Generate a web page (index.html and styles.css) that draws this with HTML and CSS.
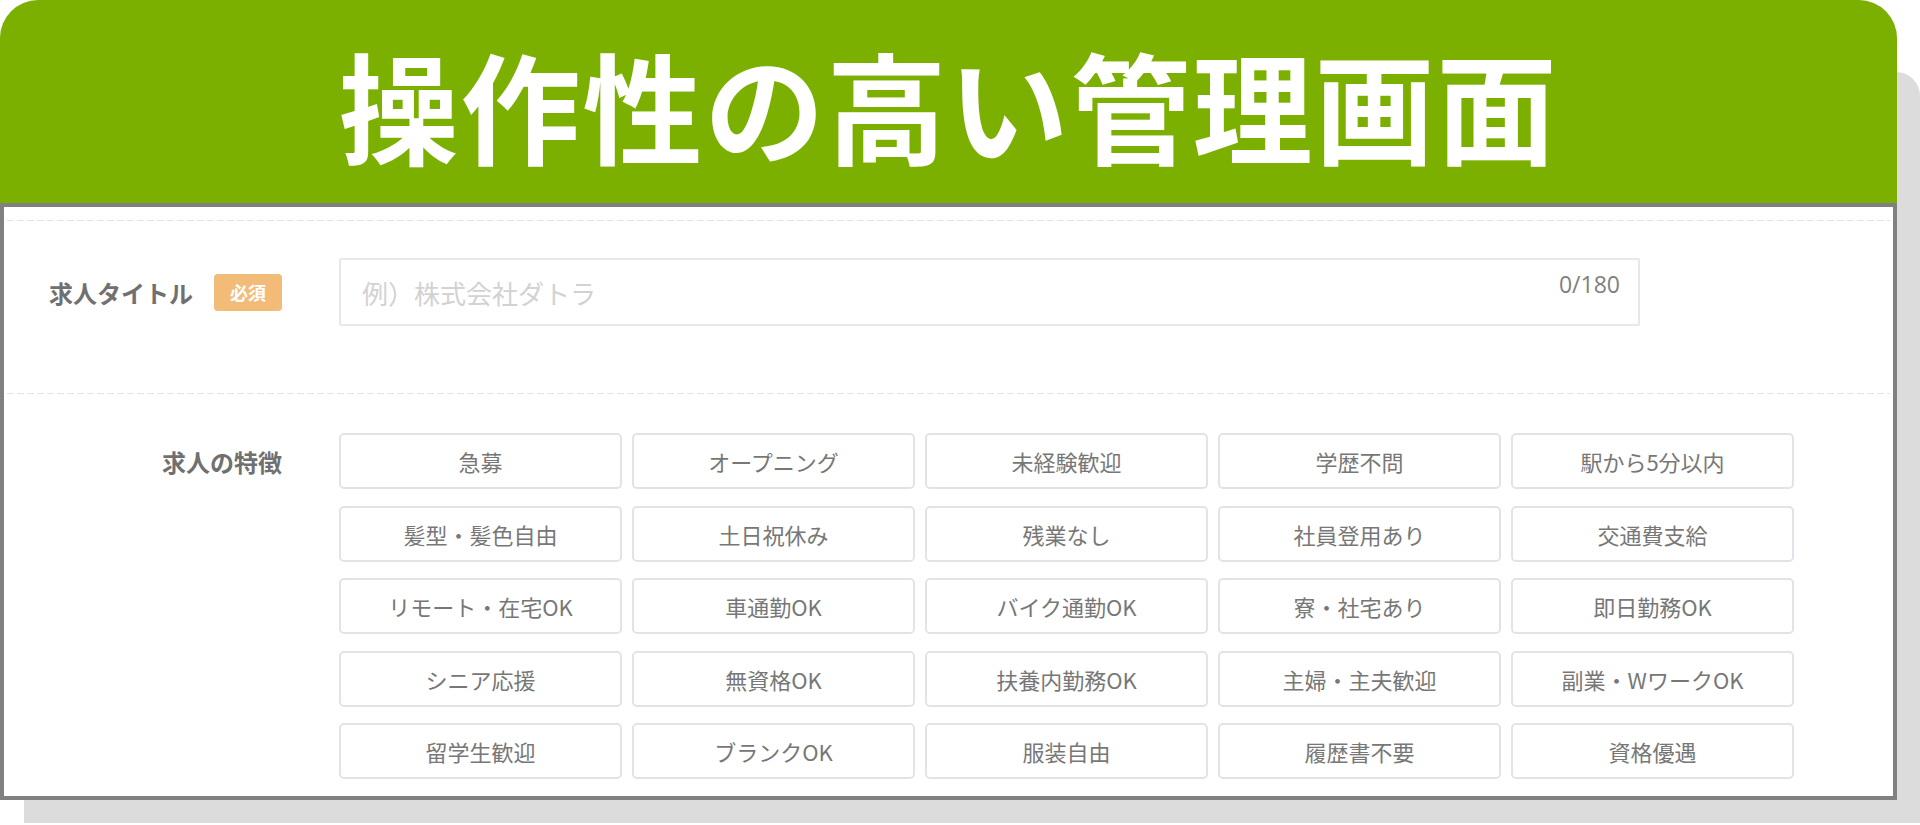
FILE: index.html
```html
<!DOCTYPE html>
<html lang="ja">
<head>
    <meta charset="UTF-8">
    <meta name="viewport" content="width=device-width, initial-scale=1.0">
    <title>操作性の高い管理画面</title>
    <link rel="stylesheet" href="styles.css">
</head>
<body>
    <div class="board">
        <div class="board-head">
            <h1>操作性の高い管理画面</h1>
        </div>
        <div class="panel">
            <div class="form-row title-row">
                <div class="field-label">
                    <span>求人タイトル</span>
                    <span class="required">必須</span>
                </div>
                <div class="text-field">
                    <input type="text" placeholder="例）株式会社ダトラ">
                    <span class="counter">0/180</span>
                </div>
            </div>
            <div class="form-row tags-row">
                <div class="field-label tags-label">
                    <span>求人の特徴</span>
                </div>
                <div class="tag-grid">
                    <span class="tag">急募</span>
                    <span class="tag">オープニング</span>
                    <span class="tag">未経験歓迎</span>
                    <span class="tag">学歴不問</span>
                    <span class="tag">駅から5分以内</span>
                    <span class="tag">髪型・髪色自由</span>
                    <span class="tag">土日祝休み</span>
                    <span class="tag">残業なし</span>
                    <span class="tag">社員登用あり</span>
                    <span class="tag">交通費支給</span>
                    <span class="tag">リモート・在宅OK</span>
                    <span class="tag">車通勤OK</span>
                    <span class="tag">バイク通勤OK</span>
                    <span class="tag">寮・社宅あり</span>
                    <span class="tag">即日勤務OK</span>
                    <span class="tag">シニア応援</span>
                    <span class="tag">無資格OK</span>
                    <span class="tag">扶養内勤務OK</span>
                    <span class="tag">主婦・主夫歓迎</span>
                    <span class="tag">副業・WワークOK</span>
                    <span class="tag">留学生歓迎</span>
                    <span class="tag">ブランクOK</span>
                    <span class="tag">服装自由</span>
                    <span class="tag">履歴書不要</span>
                    <span class="tag">資格優遇</span>
                    <span class="tag"></span>
                    <span class="tag"></span>
                    <span class="tag"></span>
                    <span class="tag"></span>
                    <span class="tag"></span>
                </div>
            </div>
        </div>
    </div>
</body>
</html>
```

FILE: styles.css
```css
body {
    margin: 0;
    width: 1920px;
    height: 825px;
    overflow: hidden;
    background: #fff;
    font-family: "Noto Sans CJK JP", sans-serif;
    color: #777;
}

.board {
    position: relative;
    z-index: 0;
    width: 1897px;
    height: 800px;
}

/* grey plate behind the card */
.board::before {
    content: "";
    position: absolute;
    left: 24px;
    top: 72px;
    width: 1896px;
    height: 751px;
    background: #dcdcdc;
    border-top-right-radius: 24px;
    z-index: -1;
}

.board-head {
    height: 203px;
    background: #7cb000;
    border-radius: 38px 38px 0 0;
    display: flex;
    align-items: center;
    justify-content: center;
}

.board-head h1 {
    margin: 0;
    padding-top: 4px;
    color: #fff;
    font-size: 120px;
    font-weight: 700;
    line-height: 1;
    letter-spacing: 2px;
}

.panel {
    box-sizing: border-box;
    height: 597px;
    padding-top: 13px;
    border: 4px solid #808080;
    background: #fff;
    overflow: hidden;
}

.form-row {
    display: flex;
    align-items: flex-start;
    margin: 0 3px;
    background-image: linear-gradient(to right, #e4e4e4 70%, transparent 70%);
    background-size: 10px 1px;
    background-repeat: repeat-x;
}

.title-row {
    padding: 38px 0 67px;
}

.tags-row {
    padding-top: 40px;
}

.field-label {
    width: 275px;
    height: 68px;
    flex-shrink: 0;
    display: flex;
    align-items: center;
    justify-content: flex-end;
    gap: 21px;
    font-size: 24px;
    font-weight: 700;
    color: #707070;
}

.tags-label {
    height: 56px;
}

.required {
    width: 68px;
    height: 37px;
    display: flex;
    align-items: center;
    justify-content: center;
    background: #f2bb77;
    border-radius: 4px;
    color: #fff;
    font-size: 18px;
}

.text-field {
    position: relative;
    margin-left: 57px;
    width: 1301px;
    height: 68px;
}

.text-field input {
    box-sizing: border-box;
    width: 100%;
    height: 100%;
    padding: 0 21px;
    border: 2px solid #e8e8e8;
    border-radius: 2px;
    font-family: inherit;
    font-size: 26px;
    outline: none;
}

.text-field input::placeholder {
    color: #d2d2d2;
}

.counter {
    position: absolute;
    right: 20px;
    top: 10px;
    font-family: "Open Sans", sans-serif;
    font-size: 23px;
    color: #808080;
}

.tag-grid {
    margin-left: 57px;
    display: grid;
    grid-template-columns: repeat(5, 283px);
    grid-auto-rows: 56px;
    column-gap: 10px;
    row-gap: 16.5px;
}

.tag {
    box-sizing: border-box;
    display: flex;
    align-items: center;
    justify-content: center;
    border: 2px solid #e0e4e8;
    border-radius: 5px;
    font-size: 22px;
    color: #777;
}
```
